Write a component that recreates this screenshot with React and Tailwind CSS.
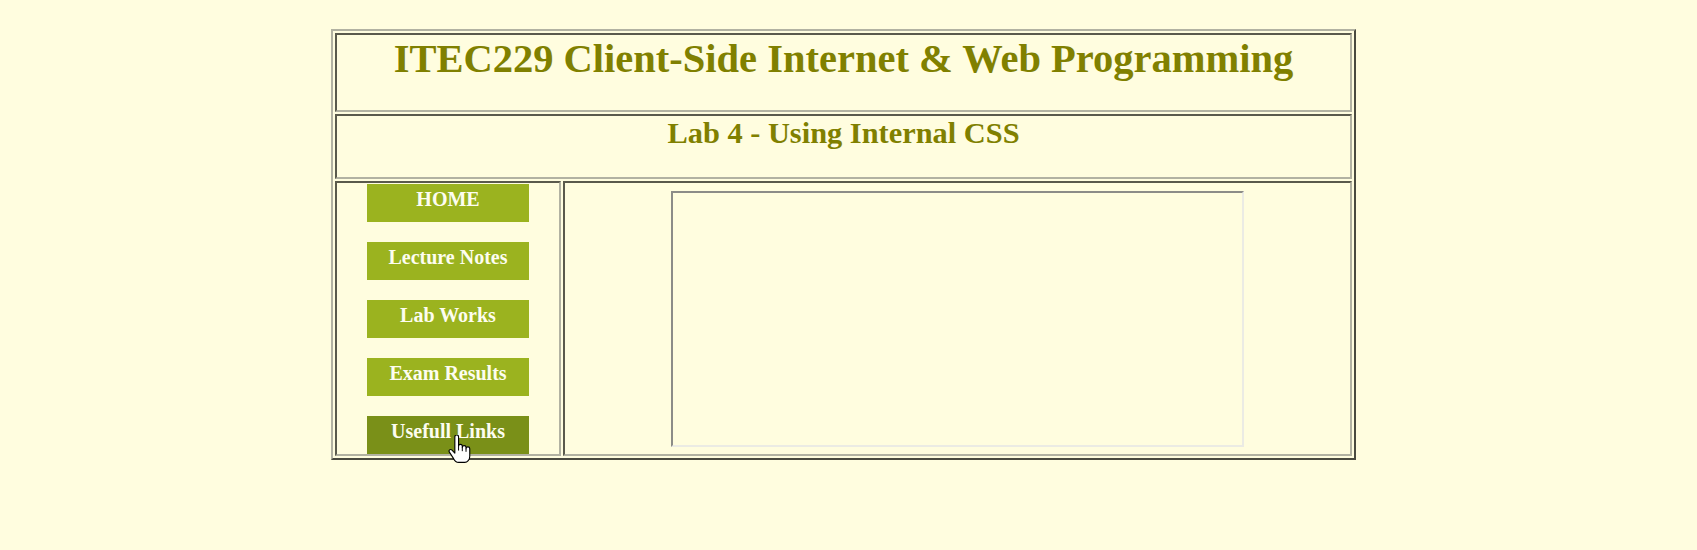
import React from "react";

const cell =
  "border-2 border-t-[#5a5a4c] border-l-[#5a5a4c] border-r-[#b2b2a2] border-b-[#b2b2a2]";

function HandCursor() {
  return (
    <svg
      width="23"
      height="28"
      viewBox="0 0 18.5 22.5"
      className="absolute left-[81px] top-[19px]"
    >
      <path
        d="M5.5 1.5a1.5 1.5 0 0 1 3 0V9a1.5 1.5 0 0 1 3 0v1a1.5 1.5 0 0 1 3 0v1a1.5 1.5 0 0 1 3 0v6c0 3-2 5-4 5H8.5c-2 0-3-1-4-3L1 13.6a1.3 1.3 0 0 1 2-1.6L5.5 14.5Z"
        fill="#ffffff"
        stroke="#000000"
        strokeWidth="0.9"
        strokeLinejoin="round"
      />
      <path
        d="M8.5 9v3.5M11.5 10v3M14.5 11v2.5"
        stroke="#000000"
        strokeWidth="0.8"
        fill="none"
      />
    </svg>
  );
}

function NavButton({ label, active }) {
  return (
    <div
      className={
        "relative w-[162px] h-[38px] pt-[4px] text-center text-[20px] leading-[23px] font-bold text-[#fdfdf0] " +
        (active ? "bg-[#7a9018]" : "bg-[#9bb31f]")
      }
    >
      {label}
      {active && <HandCursor />}
    </div>
  );
}

export default function App() {
  const items = ["HOME", "Lecture Notes", "Lab Works", "Exam Results", "Usefull Links"];
  return (
    <div className="min-h-screen bg-[#fffddf] pt-[29px] font-['Liberation_Serif','Times_New_Roman',serif]">
      <div className="ml-[331px] w-[1025px] border-2 border-t-[#b2b2a2] border-l-[#b2b2a2] border-r-[#4a4a40] border-b-[#4a4a40] p-[2px] flex flex-col gap-[2px]">
        <div className={"h-[79px] text-center " + cell}>
          <h1 className="pt-[1px] text-[40.5px] leading-[46px] font-bold text-[#808000]">
            ITEC229 Client-Side Internet &amp; Web Programming
          </h1>
        </div>
        <div className={"h-[65px] text-center " + cell}>
          <h2 className="text-[30.4px] leading-[35px] font-bold text-[#808000]">
            Lab 4 - Using Internal CSS
          </h2>
        </div>
        <div className="flex gap-[2px] h-[275px]">
          <div className={"w-[226px] flex flex-col items-center pt-[1px] gap-[20px] " + cell}>
            {items.map((it) => (
              <NavButton key={it} label={it} active={it === "Usefull Links"} />
            ))}
          </div>
          <div className={"flex-1 flex items-center justify-center " + cell}>
            <div className="w-[573px] h-[256px] border-2 border-t-[#8c8c88] border-l-[#8c8c88] border-r-[#ebebe4] border-b-[#ebebe4]" />
          </div>
        </div>
      </div>
    </div>
  );
}
